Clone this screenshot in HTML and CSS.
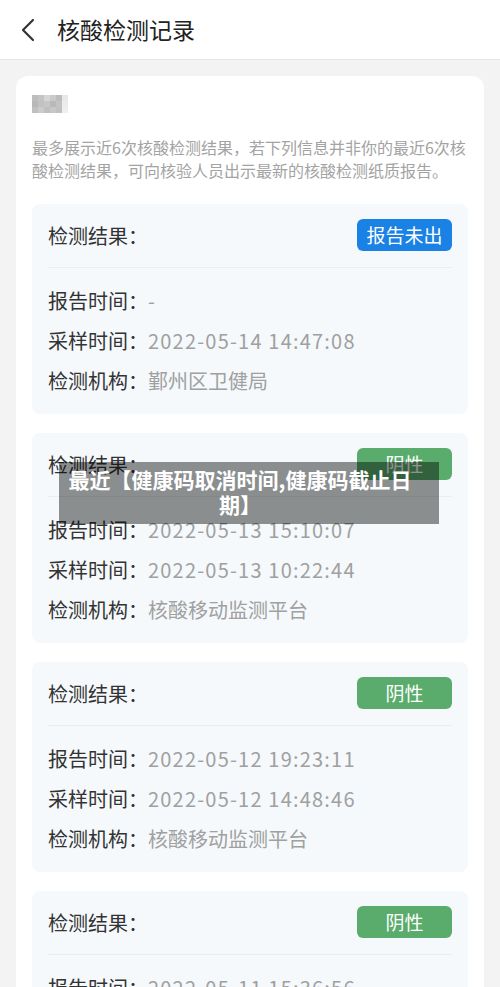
FILE: index.html
```html
<!DOCTYPE html>
<html lang="zh-CN">
<head>
    <meta charset="UTF-8">
    <meta name="viewport" content="width=device-width, initial-scale=1.0">
    <title>核酸检测记录</title>
    <link rel="stylesheet" href="styles.css">
</head>
<body>
    <div class="header">
        <svg class="back" width="16" height="24" viewBox="0 0 16 24">
            <path d="M13 2 L3 12 L13 22" fill="none" stroke="#333" stroke-width="2.2" stroke-linecap="round" stroke-linejoin="round"/>
        </svg>
        <div class="header-title">核酸检测记录</div>
    </div>

    <div class="page">
        <div class="panel">
            <div class="mosaic">
                <span style="background:#bdbdbd"></span><span style="background:#c4c4c4"></span><span style="background:#d6d6d6"></span><span style="background:#c9c9c9"></span><span style="background:#bcbcbc"></span><span style="background:#e8e8e8"></span>
                <span style="background:#b8b8b8"></span><span style="background:#c2c2c2"></span><span style="background:#c6c6c6"></span><span style="background:#b9b9b9"></span><span style="background:#c3c3c3"></span><span style="background:#ececec"></span>
                <span style="background:#c0c0c0"></span><span style="background:#cbcbcb"></span><span style="background:#bfbfbf"></span><span style="background:#c7c7c7"></span><span style="background:#c1c1c1"></span><span style="background:#efefef"></span>
            </div>
            <p class="notice">最多展示近6次核酸检测结果，若下列信息并非你的最近6次核酸检测结果，可向核验人员出示最新的核酸检测纸质报告。</p>

            <div class="record">
                <div class="record-head">
                    <span class="label">检测结果：</span>
                    <span class="badge badge-blue">报告未出</span>
                </div>
                <div class="record-body">
                    <div class="row"><span class="label">报告时间：</span><span class="value">-</span></div>
                    <div class="row"><span class="label">采样时间：</span><span class="value time">2022-05-14 14:47:08</span></div>
                    <div class="row"><span class="label">检测机构：</span><span class="value">鄞州区卫健局</span></div>
                </div>
            </div>

            <div class="record">
                <div class="record-head">
                    <span class="label">检测结果：</span>
                    <span class="badge badge-green">阴性</span>
                </div>
                <div class="record-body">
                    <div class="row"><span class="label">报告时间：</span><span class="value time">2022-05-13 15:10:07</span></div>
                    <div class="row"><span class="label">采样时间：</span><span class="value time">2022-05-13 10:22:44</span></div>
                    <div class="row"><span class="label">检测机构：</span><span class="value">核酸移动监测平台</span></div>
                </div>
            </div>

            <div class="record">
                <div class="record-head">
                    <span class="label">检测结果：</span>
                    <span class="badge badge-green">阴性</span>
                </div>
                <div class="record-body">
                    <div class="row"><span class="label">报告时间：</span><span class="value time">2022-05-12 19:23:11</span></div>
                    <div class="row"><span class="label">采样时间：</span><span class="value time">2022-05-12 14:48:46</span></div>
                    <div class="row"><span class="label">检测机构：</span><span class="value">核酸移动监测平台</span></div>
                </div>
            </div>

            <div class="record">
                <div class="record-head">
                    <span class="label">检测结果：</span>
                    <span class="badge badge-green">阴性</span>
                </div>
                <div class="record-body">
                    <div class="row"><span class="label">报告时间：</span><span class="value time">2022-05-11 15:36:56</span></div>
                    <div class="row"><span class="label">采样时间：</span><span class="value time">2022-05-11 10:05:31</span></div>
                    <div class="row"><span class="label">检测机构：</span><span class="value">核酸移动监测平台</span></div>
                </div>
            </div>
        </div>
    </div>

    <div class="caption">最近【健康码取消时间,健康码截止日期】</div>
</body>
</html>
```

FILE: styles.css
```css
body {
    margin: 0;
    height: 987px;
    overflow: hidden;
    font-family: "Noto Sans CJK SC", "Noto Sans", sans-serif;
    background: #f3f3f3;
}

.header {
    height: 59px;
    background: #ffffff;
    border-bottom: 1px solid #e6e6e6;
    display: flex;
    align-items: center;
    padding-left: 20px;
}

.back {
    display: block;
    margin-right: 21px;
}

.header-title {
    font-size: 23px;
    color: #222;
    line-height: 1;
}

.page {
    padding: 16px 16px 0;
}

.panel {
    background: #ffffff;
    border-radius: 12px 12px 0 0;
    padding: 19px 16px 0;
    min-height: 1000px;
}

.mosaic {
    display: grid;
    grid-template-columns: repeat(6, 6px);
    grid-auto-rows: 6px;
    width: 40px;
    filter: blur(0.6px);
}

.notice {
    margin: 23px 0 22px;
    font-size: 16px;
    line-height: 23px;
    color: #a3a3a3;
}

.record {
    background: #f5f9fc;
    border-radius: 8px;
    padding: 0 16px;
    margin-bottom: 19px;
    height: 210px;
    box-sizing: border-box;
}

.record-head {
    display: flex;
    justify-content: space-between;
    align-items: center;
    padding: 15px 0 16px;
    border-bottom: 1px solid #e9eef3;
}

.label {
    font-size: 20px;
    color: #333;
}

.badge {
    width: 95px;
    height: 32px;
    border-radius: 6px;
    color: #ffffff;
    font-size: 19px;
    line-height: 32px;
    text-align: center;
}

.badge-blue {
    background: #1a81e5;
}

.badge-green {
    background: #59ac6b;
}

.record-body {
    padding-top: 12px;
}

.row {
    display: flex;
    align-items: center;
    height: 40px;
}

.value {
    font-size: 20px;
    color: #a0a0a0;
}

.time {
    letter-spacing: 1.2px;
}

.caption {
    position: absolute;
    top: 462px;
    left: 59px;
    width: 380px;
    height: 62px;
    box-sizing: border-box;
    padding: 5px 24px 6px 6px;
    background: rgba(0, 0, 0, 0.43);
    color: #ffffff;
    font-size: 21px;
    font-weight: bold;
    line-height: 25px;
    text-align: center;
}
```
